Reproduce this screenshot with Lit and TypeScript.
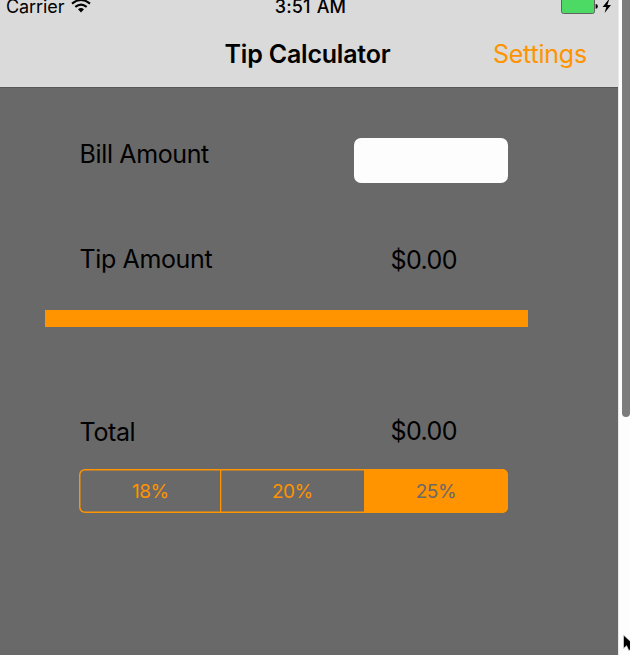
import { LitElement, html, css } from "lit";
import { customElement, state } from "lit/decorators.js";
import { classMap } from "lit/directives/class-map.js";

@customElement("app-root")
export class AppRoot extends LitElement {
  static styles = css`
    :host {
      display: flex;
      width: 630px;
      height: 655px;
      overflow: hidden;
      background: #fdfdfd;
      font-family: Inter, "Liberation Sans", sans-serif;
      color: #000;
    }
    .phone {
      box-sizing: border-box;
      width: 618px;
      height: 655px;
      background: #696969;
      display: flex;
      flex-direction: column;
    }
    .header {
      box-sizing: border-box;
      height: 88px;
      background: #dadada;
      border-bottom: 1px solid #575757;
    }
    .status, .nav {
      display: grid;
      grid-template-columns: 1fr auto 1fr;
      align-items: start;
    }
    .status {
      height: 35px;
      padding: 0 6px;
      font-size: 18px;
      line-height: 13px;
    }
    .left { display: flex; gap: 7px; }
    .carrier { letter-spacing: -0.08px; }
    .time { font-weight: 500; letter-spacing: 0.15px; word-spacing: 1px; padding-left: 3px; }
    .power { display: flex; justify-content: flex-end; gap: 4px; }
    svg { display: block; }
    .nav {
      padding: 4px 31px 0 30px;
      font-size: 25px;
      line-height: 30px;
    }
    .title { grid-column: 2; font-weight: 600; letter-spacing: -0.2px; margin-left: -2px; }
    .settings { color: #ff9300; text-align: right; letter-spacing: -0.2px; }
    .body {
      display: flex;
      flex-direction: column;
      padding: 50px 109px 0 80px;
      font-size: 25px;
      line-height: 30px;
    }
    .row { display: flex; justify-content: space-between; align-items: flex-start; }
    .label { padding-top: 1px; letter-spacing: -0.38px; margin-left: -0.4px; }
    .bill { height: 106px; }
    .field {
      width: 154px;
      height: 44.4px;
      border-radius: 7px;
      background: #fdfdfd;
      margin-top: 0.3px;
      margin-right: 1px;
    }
    .tip { height: 66px; }
    .tip .label { padding-top: 0; }
    .amount { padding-right: 52px; padding-top: 1px; letter-spacing: -0.55px; }
    .bar { height: 16.6px; background: #ff9300; margin: 0.4px -19px 0 -35px; }
    .total { height: 53.5px; margin-top: 89px; }
    .total .amount { padding-top: 0; }
    .segments {
      box-sizing: border-box;
      display: grid;
      grid-template-columns: 140px 144px 1fr;
      height: 44px;
      padding: 0 1px;
      border-radius: 6px;
      box-shadow: inset 0 0 0 1.5px #ff9300;
      overflow: hidden;
      margin: 0 0 0 -0.6px;
      width: 429px;
      color: #ff9300;
      font-size: 19px;
      letter-spacing: -0.5px;
      line-height: 45px;
      text-align: center;
    }
    .segment { box-shadow: 1.3px 0 #ff9300; }
    .active { background: #ff9300; color: #696969; }
    .gutter {
      flex: 1;
      display: flex;
      flex-direction: column;
      align-items: flex-end;
      justify-content: space-between;
      border-left: 1px solid #e9e9e9;
    }
    .thumb {
      width: 8px;
      height: 417px;
      background: #7c7c7c;
      border-radius: 0 0 4px 4px;
    }
    .pointer { margin-bottom: 3px; }
  `;

  @state() private rate = 25;

  render() {
    return html`
      <main class="phone">
        <header class="header">
          <div class="status">
            <div class="left">
              <span class="carrier">Carrier</span>
              <svg width="20" height="13" viewBox="0 0 20 13">
                <g fill="none" stroke="#000" stroke-width="2.1">
                  <path d="M1 3.6Q10-3.6 19 3.6" />
                  <path d="M4.3 6.9Q10 2.4 15.7 6.9" />
                </g>
                <path d="M7 9.3Q10 6.8 13 9.3L10 12.4Z" />
              </svg>
            </div>
            <span class="time">3:51 AM</span>
            <div class="power">
              <svg width="37" height="15" viewBox="0 0 37 15">
                <rect x="0.5" y="-6" width="33" height="19.5" rx="2" fill="#4cd964" stroke="#626262" />
                <path d="M34.6 4Q36.8 4 36.8 6.4T34.6 8.8Z" />
              </svg>
              <svg class="bolt" width="10" height="14" viewBox="0 0 10 14">
                <path d="M6.2 0L0.6 7H4.3L2.6 13L9 5H5.4L7 0Z" />
              </svg>
            </div>
          </div>
          <div class="nav">
            <span class="title">Tip Calculator</span>
            <span class="settings">Settings</span>
          </div>
        </header>
        <section class="body">
          <div class="row bill">
            <span class="label">Bill Amount</span>
            <div class="field"></div>
          </div>
          <div class="row tip">
            <span class="label">Tip Amount</span>
            <span class="amount">$0.00</span>
          </div>
          <div class="bar"></div>
          <div class="row total">
            <span class="label">Total</span>
            <span class="amount">$0.00</span>
          </div>
          <div class="segments">
            ${[18, 20, 25].map(
              (r) => html`<div
                class=${classMap({ segment: true, active: r === this.rate })}
                @click=${() => (this.rate = r)}
              >${r}%</div>`
            )}
          </div>
        </section>
      </main>
      <aside class="gutter">
        <div class="thumb"></div>
        <svg class="pointer" width="8" height="18" viewBox="0 0 8 18">
          <path d="M1.5 1V14.5L4.6 11.7L6.8 16.5L9 15.5V8Z" stroke="#ddd" stroke-width="0.7" />
        </svg>
      </aside>
    `;
  }
}
